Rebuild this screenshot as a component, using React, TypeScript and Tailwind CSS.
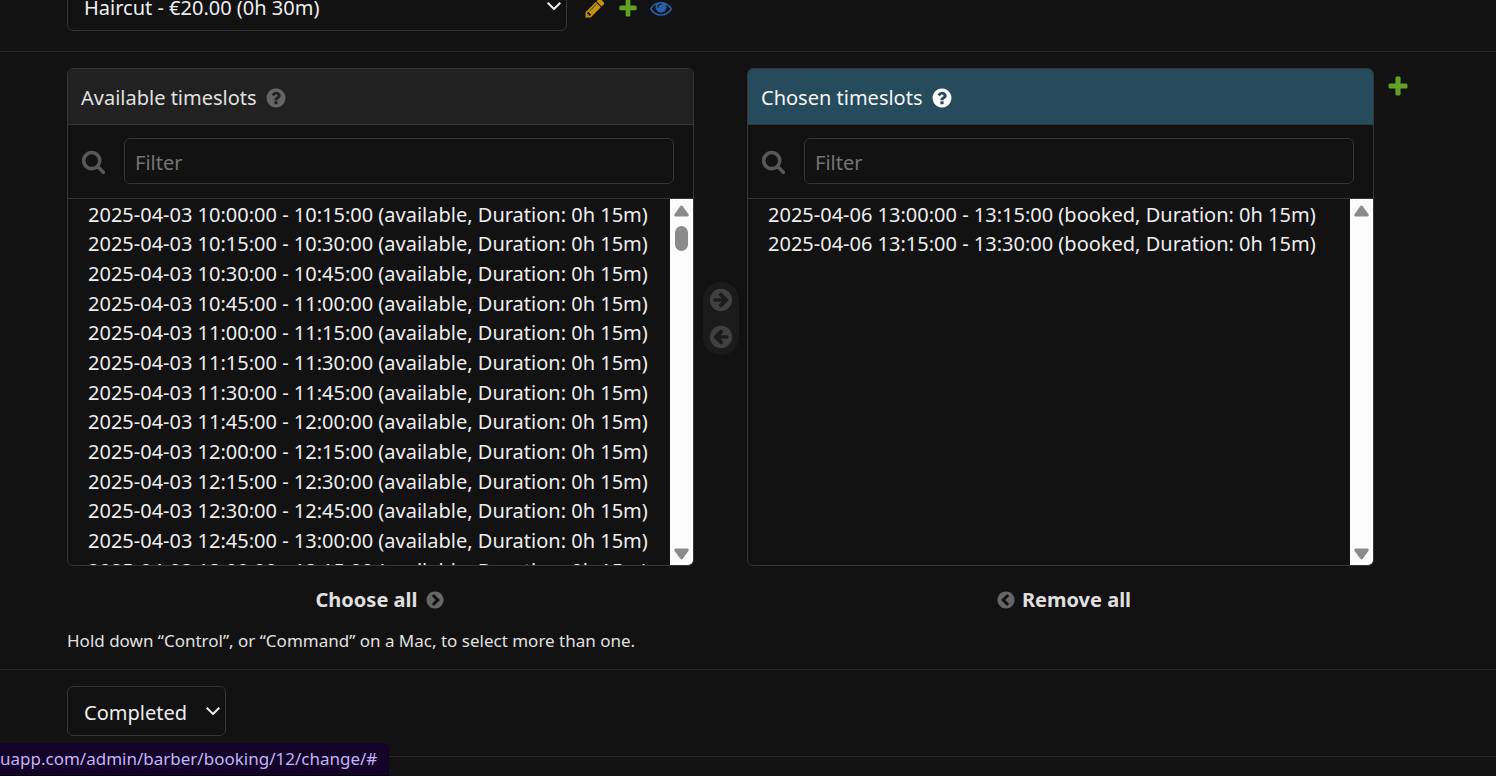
import type { ReactNode } from "react";

const CIRCLE =
  "m0 0M1664 896q0 209-103 385.5t-279.5 279.5-385.5 103-385.5-103-279.5-279.5-103-385.5 103-385.5 279.5-279.5 385.5-103 385.5 103 279.5 279.5 103 385.5z";

const PATHS = {
  pencil:
    "M491 1536l91-91-235-235-91 91v107h128v128h107zm523-928q0-22-22-22-10 0-17 7l-542 542q-7 7-7 17 0 22 22 22 10 0 17-7l542-542q7-7 7-17zm-54-192l416 416-832 832h-416v-416zm683 96q0 53-37 90l-166 166-416-416 166-165q36-38 90-38 53 0 91 38l235 234q37 39 37 91z",
  plus: "M1600 796v192q0 40-28 68t-68 28h-416v416q0 40-28 68t-68 28h-192q-40 0-68-28t-28-68v-416h-416q-40 0-68-28t-28-68v-192q0-40 28-68t68-28h416v-416q0-40 28-68t68-28h192q40 0 68 28t28 68v416h416q40 0 68 28t28 68z",
  eye: "M1664 960q-152-236-381-353 61 104 61 225 0 185-131.5 316.5t-316.5 131.5-316.5-131.5-131.5-316.5q0-121 61-225-229 117-381 353 133 205 333.5 326.5t434.5 121.5 434.5-121.5 333.5-326.5zm-720-384q0-20-14-34t-34-14q-125 0-214.5 89.5t-89.5 214.5q0 20 14 34t34 14 34-14 14-34q0-86 61-147t147-61q20 0 34-14t14-34zm848 384q0 34-20 69-140 230-376.5 368.5t-499.5 138.5-499.5-139-376.5-368q-20-35-20-69t20-69q140-229 376.5-368t499.5-139 499.5 139 376.5 368q20 35 20 69z",
  search:
    "M1216 832q0-185-131.5-316.5t-316.5-131.5-316.5 131.5-131.5 316.5 131.5 316.5 316.5 131.5 316.5-131.5 131.5-316.5zm512 832q0 52-38 90t-90 38q-54 0-90-38l-343-342q-179 124-399 124-143 0-273.5-55.5t-225-150-150-225-55.5-273.5 55.5-273.5 150-225 225-150 273.5-55.5 273.5 55.5 225 150 150 225 55.5 273.5q0 220-124 399l343 343q37 37 37 90z",
  question:
    "M1024 1376v-192q0-14-9-23t-23-9h-192q-14 0-23 9t-9 23v192q0 14 9 23t23 9h192q14 0 23-9t9-23zm256-672q0-88-55.5-163t-138.5-116-170-41q-243 0-371 213-15 24 8 42l132 100q7 6 19 6 16 0 25-12 53-68 86-92 34-24 86-24 48 0 85.5 26t37.5 59q0 38-20 61t-68 45q-63 28-115.5 86.5t-52.5 125.5v36q0 14 9 23t23 9h192q14 0 23-9t9-23q0-19 21.5-49.5t54.5-49.5q32-18 49-28.5t46-35 44.5-48 28-60.5 12.5-81z" +
    CIRCLE,
  arrow:
    "M1413 896q0-27-18-45l-91-91-362-362q-18-18-45-18t-45 18l-91 91q-18 18-18 45t18 45l189 189h-502q-26 0-45 19t-19 45v128q0 26 19 45t45 19h502l-189 189q-18 18-18 45t18 45l91 91q18 18 45 18t45-18l362-362 91-91q18-18 18-45z" +
    CIRCLE,
  chevron:
    "M845 1395l454-454q19-19 19-45t-19-45l-454-454q-19-19-45-19t-45 19l-102 102q-19 19-19 45t19 45l307 307-307 307q-19 19-19 45t19 45l102 102q19 19 45 19t45-19z" +
    CIRCLE,
};

function Icon({ name, className }: { name: keyof typeof PATHS; className: string }) {
  return (
    <svg viewBox="0 0 1792 1792" fill="currentColor" fillRule="evenodd" aria-hidden="true" className={`shrink-0 ${className}`}>
      <path d={PATHS[name]} />
    </svg>
  );
}

function Dropdown({ label, value, className }: { label: string; value: string; className: string }) {
  return (
    <div className={`relative ${className}`}>
      <select
        aria-label={label}
        className="h-[50px] w-full appearance-none rounded-md border border-[#353535] bg-[#121212] pt-1 pr-8 pl-4 text-xl text-[#eeeeee]"
      >
        <option>{value}</option>
      </select>
      <svg
        viewBox="0 0 14 8"
        fill="none"
        stroke="#eeeeee"
        strokeWidth="2"
        aria-hidden="true"
        className="pointer-events-none absolute top-[21px] right-1.5 h-2 w-3.5"
      >
        <path d="M0.7 0.7L7 7L13.3 0.7" />
      </svg>
    </div>
  );
}

function Scrollbar({ thumb }: { thumb: boolean }) {
  return (
    <div aria-hidden="true" className="flex w-[23px] shrink-0 flex-col items-center bg-[#fcfcfc] pt-1.5 pb-[5px]">
      <svg viewBox="0 0 15 12" fill="#8b8b8b" className="h-3 w-[15px]">
        <path d="M6.3 1.2Q7.5-0.4 8.7 1.2L14.4 9Q15.4 11 13.4 11.5H1.6Q-0.4 11 0.6 9Z" />
      </svg>
      {thumb && <div className="mt-[9px] h-[25px] w-[13px] rounded-full bg-[#8b8b8b]" />}
      <svg viewBox="0 0 15 12" fill="#8b8b8b" className="mt-auto h-3 w-[15px]">
        <path d="M6.3 10.8Q7.5 12.4 8.7 10.8L14.4 3Q15.4 1 13.4 0.5H1.6Q-0.4 1 0.6 3Z" />
      </svg>
    </div>
  );
}

type PanelProps = {
  id: string;
  title: string;
  items: string[];
  headerClass: string;
  helpClass: string;
  thumb?: boolean;
  action: ReactNode;
};

function Panel({ id, title, items, headerClass, helpClass, thumb = false, action }: PanelProps) {
  return (
    <div className="flex min-w-0 flex-1 flex-col">
      <div className="overflow-hidden rounded-md border border-[#353535]">
        <div className={`flex h-14 items-center gap-2 border-b border-[#353535] px-[13px] pt-0.5 text-xl ${headerClass}`}>
          <label htmlFor={id}>{title}</label>
          <button type="button" aria-label={`Help: ${title}`} className={helpClass}>
            <Icon name="question" className="size-[22px]" />
          </button>
        </div>
        <div className="flex items-center gap-[18px] border-b border-[#353535] pt-[13px] pr-[19px] pb-3.5 pl-[13px]">
          <Icon name="search" className="size-[25px] text-[#585858]" />
          <input
            type="text"
            placeholder="Filter"
            aria-label={`Filter ${title}`}
            className="h-[46px] min-w-0 flex-1 rounded-md border border-[#353535] bg-[#121212] px-2.5 pt-0.5 text-xl text-[#eeeeee] placeholder:text-[#757575]"
          />
        </div>
        <div className="flex h-[366px]">
          <select
            id={id}
            multiple
            className="h-full min-w-0 flex-1 overflow-hidden bg-[#121212] text-xl text-[#eeeeee] [scrollbar-width:none]"
          >
            {items.map((item) => (
              <option key={item} className="pt-0.5 pr-0 pb-px pl-5 nth-[3n+1]:pb-0">
                {item}
              </option>
            ))}
          </select>
          <Scrollbar thumb={thumb} />
        </div>
      </div>
      <div className="flex justify-center pt-5 text-[#e0e0e0]">{action}</div>
    </div>
  );
}

const time = (minutes: number) =>
  `${String(Math.floor(minutes / 60)).padStart(2, "0")}:${String(minutes % 60).padStart(2, "0")}:00`;

const slot = (date: string, start: number, state: string) =>
  `${date} ${time(start)} - ${time(start + 15)} (${state}, Duration: 0h 15m)`;

const AVAILABLE = Array.from({ length: 13 }, (_, i) => slot("2025-04-03", 600 + i * 15, "available"));
const CHOSEN = [slot("2025-04-06", 780, "booked"), slot("2025-04-06", 795, "booked")];

export default function App() {
  return (
    <div className="h-screen overflow-hidden bg-[#121212] font-['Noto_Sans',sans-serif] text-[#e0e0e0]">
      <form onSubmit={(e) => e.preventDefault()}>
        <div className="-mt-[19px] flex items-end border-b border-[#272727] pb-5 pl-[67px]">
          <Dropdown label="Service" value="Haircut - €20.00 (0h 30m)" className="w-[500px]" />
          <div className="ml-[17px] flex gap-[11px] pb-3">
            <a href="#change" aria-label="Change service" className="text-[#c1940c]">
              <Icon name="pencil" className="size-[22px]" />
            </a>
            <a href="#add" aria-label="Add service" className="text-[#5fa225]">
              <Icon name="plus" className="size-[22px]" />
            </a>
            <a href="#view" aria-label="View service" className="text-[#2560a8]">
              <Icon name="eye" className="size-[22px]" />
            </a>
          </div>
        </div>

        <div className="border-b border-[#272727] pt-4 pr-[86px] pb-3.5 pl-[67px]">
          <div className="flex items-start">
            <Panel
              id="available"
              title="Available timeslots"
              items={AVAILABLE}
              headerClass="bg-[#212121] text-[#e0e0e0]"
              helpClass="text-[#666666]"
              thumb
              action={
                <a href="#choose-all" className="flex items-center gap-2 text-xl font-bold">
                  Choose all
                  <Icon name="chevron" className="size-5 text-[#666666]" />
                </a>
              }
            />
            <div className="mt-[214px] mr-2 ml-[9px] flex w-9 flex-col items-center gap-[11px] rounded-full bg-[#1b1b1b] py-[5px]">
              <button type="button" aria-label="Choose" className="text-[#414141]">
                <Icon name="arrow" className="size-[26px]" />
              </button>
              <button type="button" aria-label="Remove" className="text-[#414141]">
                <Icon name="arrow" className="size-[26px] rotate-180" />
              </button>
            </div>
            <Panel
              id="chosen"
              title="Chosen timeslots"
              items={CHOSEN}
              headerClass="bg-[#264b5d] text-[#f5f5f5]"
              helpClass="text-white"
              action={
                <a href="#remove-all" className="flex items-center gap-1.5 pl-1.5 text-xl font-bold">
                  <Icon name="chevron" className="size-5 rotate-180 text-[#666666]" />
                  Remove all
                </a>
              }
            />
            <a href="#add-slot" aria-label="Add timeslot" className="mt-1.5 ml-3 text-[#5fa225]">
              <Icon name="plus" className="size-6" />
            </a>
          </div>
          <p className="pt-[13px] text-[17px] leading-7">
            Hold down “Control”, or “Command” on a Mac, to select more than one.
          </p>
        </div>

        <div className="border-b border-[#272727] pt-4 pb-5 pl-[67px]">
          <Dropdown label="Status" value="Completed" className="w-[159px]" />
        </div>
      </form>

      <div className="fixed bottom-0 left-0 rounded-tr-md border-b border-black bg-[#130329] pr-3 text-[17px] leading-8 text-[#c5b3f5]">
        uapp.com/admin/barber/booking/12/change/#
      </div>
    </div>
  );
}
